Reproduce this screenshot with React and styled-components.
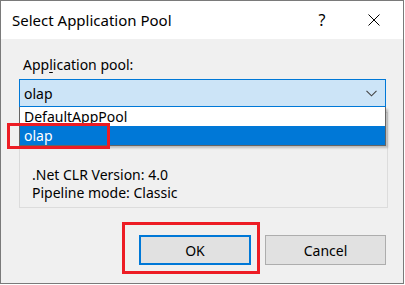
import React from "react";
import styled, { createGlobalStyle } from "styled-components";

const GlobalStyle = createGlobalStyle`
  html, body {
    margin: 0;
    padding: 0;
    background: #ffffff;
  }
  body {
    font-family: "Noto Sans", "Liberation Sans", sans-serif;
  }
`

const Window = styled.div`
  width: 404px;
  height: 284px;
  box-sizing: border-box;
  border: 1px solid #7a7a7a;
  display: flex;
  flex-direction: column;
  background: #f0f0f0;
`

const TitleBar = styled.div`
  height: 38px;
  background: #ffffff;
  display: flex;
  align-items: center;
  padding-left: 11px;
  color: #000;
`

const Title = styled.div`
  flex: 1;
  font-size: 15px;
`

const CaptionButton = styled.div`
  width: ${p => p.w}px;
  height: 38px;
  display: flex;
  align-items: center;
  justify-content: center;
  font-size: 16px;
`

const Body = styled.div`
  flex: 1;
  padding: 15px 17px 0 18px;
  display: flex;
  flex-direction: column;
`

const Label = styled.div`
  font-size: 14px;
  color: #000;
  padding-left: 4px;
  height: 22px;
  line-height: 22px;
`

const Mnemonic = styled.span`
  text-decoration: underline;
  text-underline-offset: 2px;
`

const ComboWrap = styled.div`
  position: relative;
  margin-top: 3px;
  z-index: 2;
`

const Combo = styled.div`
  height: 28px;
  box-sizing: border-box;
  border: 1px solid #0078d7;
  background: #cce4f7;
  display: flex;
  align-items: center;
  padding: 0 8px 0 4px;
  font-size: 14px;
  color: #000;
`

const ComboText = styled.div`
  flex: 1;
`

const DropList = styled.div`
  position: absolute;
  left: 0;
  right: 0;
  top: 100%;
  background: #fff;
  border: 1px solid #646464;
  border-top: none;
  box-shadow: 2px 2px 2px rgba(0, 0, 0, 0.22);
`

const Item = styled.div`
  height: 19px;
  line-height: 19px;
  padding-left: 4px;
  font-size: 14px;
  background: ${p => (p.selected ? "#0078d7" : "#ffffff")};
  color: ${p => (p.selected ? "#ffffff" : "#000000")};
`

const Highlight = styled.div`
  position: absolute;
  border: 3px solid #ed1c24;
  pointer-events: none;
`

const GroupBox = styled.div`
  margin-top: 5px;
  height: 96px;
  box-sizing: border-box;
  border: 1px solid #dcdcdc;
  margin-right: -2px;
  padding: 53px 0 0 12px;
  font-size: 14px;
  line-height: 18px;
  color: #000;
`

const ButtonRow = styled.div`
  display: flex;
  justify-content: flex-end;
  gap: 14px;
  margin-top: 27px;
`

const ButtonWrap = styled.div`
  position: relative;
`

const Button = styled.div`
  width: ${p => p.w}px;
  height: 30px;
  box-sizing: border-box;
  border: ${p => (p.primary ? "2px solid #0078d7" : "1px solid #adadad")};
  background: #e1e1e1;
  display: flex;
  align-items: center;
  justify-content: center;
  font-size: 14px;
  color: #000;
`

const Chevron = () => (
  <svg width="11" height="7" viewBox="0 0 11 7">
    <path d="M0.5 0.8 L5.5 5.8 L10.5 0.8" fill="none" stroke="#444" strokeWidth="1.1" />
  </svg>
)

const CloseIcon = () => (
  <svg width="12" height="12" viewBox="0 0 12 12">
    <path d="M0.5 0.5 L11.5 11.5 M11.5 0.5 L0.5 11.5" stroke="#000" strokeWidth="1" />
  </svg>
)

export default function App() {
  return (
    <>
      <GlobalStyle />
      <Window>
        <TitleBar>
          <Title>Select Application Pool</Title>
          <CaptionButton w={46}>?</CaptionButton>
          <CaptionButton w={58}>
            <CloseIcon />
          </CaptionButton>
        </TitleBar>
        <Body>
          <Label>
            App<Mnemonic>l</Mnemonic>ication pool:
          </Label>
          <ComboWrap>
            <Combo>
              <ComboText>olap</ComboText>
              <Chevron />
            </Combo>
            <DropList>
              <Item>DefaultAppPool</Item>
              <Item selected>olap</Item>
            </DropList>
            <Highlight style={{ left: -12, top: 44, width: 97, height: 20 }} />
          </ComboWrap>
          <GroupBox>
            <div>.Net CLR Version: 4.0</div>
            <div>Pipeline mode: Classic</div>
          </GroupBox>
          <ButtonRow>
            <ButtonWrap>
              <Button primary w={112}>OK</Button>
              <Highlight style={{ left: -17, top: -13, width: 132, height: 46 }} />
            </ButtonWrap>
            <Button w={121}>Cancel</Button>
          </ButtonRow>
        </Body>
      </Window>
    </>
  )
}
